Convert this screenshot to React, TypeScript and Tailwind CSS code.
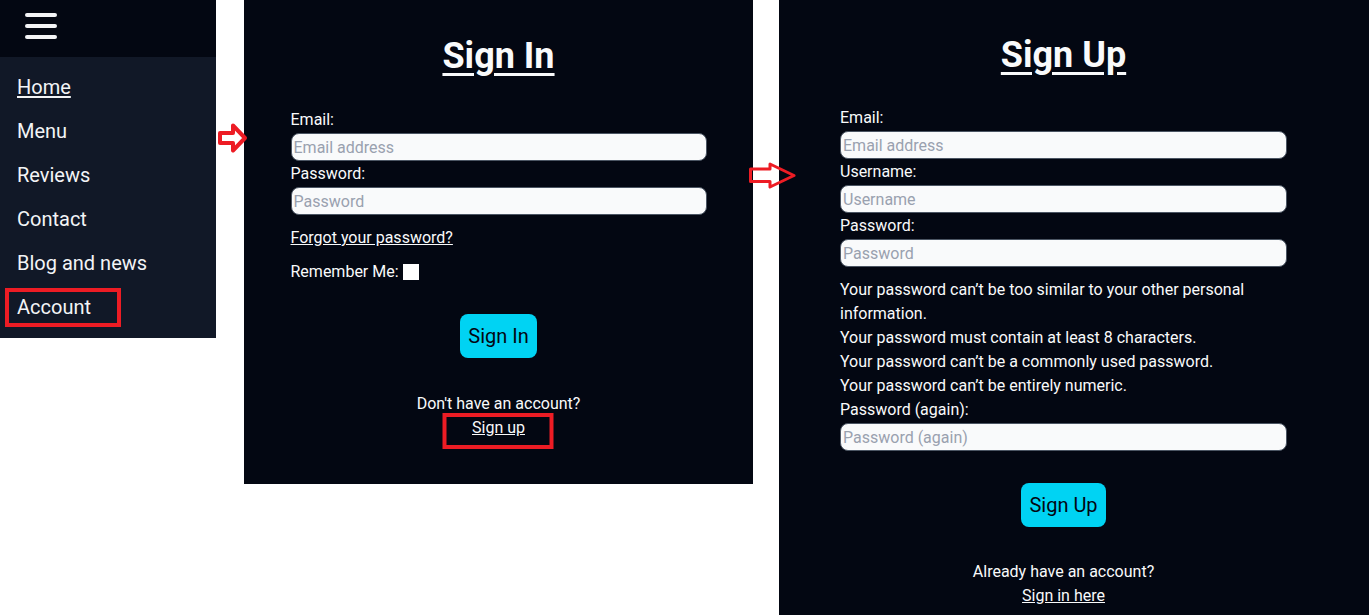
import React from "react"

const RED = "#ed1c24"

function Field({ label, placeholder, type = "text" }: { label: string; placeholder: string; type?: string }) {
  return (
    <div>
      <label className="block h-6 leading-6">{label}</label>
      <input
        type={type}
        placeholder={placeholder}
        className="mt-px mb-px block h-7 w-full rounded-lg border border-[#4b5563] bg-gray-50 px-0.5 text-base text-gray-900 placeholder:text-gray-400 outline-none"
      />
    </div>
  )
}

function SideMenu() {
  const items = ["Home", "Menu", "Reviews", "Contact", "Blog and news", "Account"]
  return (
    <div className="w-[216px] shrink-0">
      {/* top bar with hamburger */}
      <div className="h-[57px] bg-[#030712] pl-[25px] pt-[13px]">
        <div className="flex w-8 flex-col gap-[7px]">
          <span className="h-1 w-8 rounded-full bg-gray-100" />
          <span className="h-1 w-8 rounded-full bg-gray-100" />
          <span className="h-1 w-8 rounded-full bg-gray-100" />
        </div>
      </div>
      <nav className="bg-[#111827] pb-[9px] pt-2">
        {items.map((item, i) => (
          <div key={item} className="relative py-2 pl-[17px] text-xl leading-7 text-gray-100">
            <a href="#" className={i === 0 ? "underline underline-offset-2" : ""}>
              {item}
            </a>
            {item === "Account" && (
              <span className="pointer-events-none absolute left-[5px] top-[3px] h-[39px] w-[116px] border-4 border-[#ed1c24]" />
            )}
          </div>
        ))}
      </nav>
    </div>
  )
}

function SignIn() {
  return (
    <div className="w-[509px] shrink-0 bg-[#030712] pb-[44px] pt-[36px] text-gray-50">
      <h1 className="text-center text-4xl font-bold leading-10 underline underline-offset-[5px]">Sign In</h1>
      <form className="mx-auto mt-[32px] w-[416px]">
        <Field label="Email:" placeholder="Email address" />
        <Field label="Password:" placeholder="Password" type="password" />
        <a href="#" className="mt-[11px] block h-6 w-fit leading-6 underline">
          Forgot your password?
        </a>
        <div className="mt-[10px] flex h-6 items-center">
          <span>Remember Me:</span>
          <span className="ml-1 h-4 w-4 bg-white" />
        </div>
        <div className="mt-[30px] flex justify-center">
          <button type="button" className="h-11 rounded-lg bg-cyan-400 px-2 text-xl text-gray-950">
            Sign In
          </button>
        </div>
      </form>
      <p className="mt-[34px] text-center leading-6">Don't have an account?</p>
      <div className="text-center leading-6">
        <span className="relative inline-block">
          <a href="#" className="underline">
            Sign up
          </a>
          <span className="pointer-events-none absolute left-1/2 top-[-3px] h-9 w-[111px] -translate-x-1/2 border-4 border-[#ed1c24]" />
        </span>
      </div>
    </div>
  )
}

function SignUp() {
  const help = [
    "Your password can’t be too similar to your other personal information.",
    "Your password must contain at least 8 characters.",
    "Your password can’t be a commonly used password.",
    "Your password can’t be entirely numeric.",
  ]
  return (
    <div className="h-full w-[590px] shrink-0 bg-[#030712] pl-[61px] pt-[35px] text-gray-50">
      <div className="w-[447px]">
        <h1 className="text-center text-4xl font-bold leading-10 underline underline-offset-[5px]">Sign Up</h1>
        <form className="mt-[31px]">
          <Field label="Email:" placeholder="Email address" />
          <Field label="Username:" placeholder="Username" />
          <Field label="Password:" placeholder="Password" type="password" />
          <ul className="mt-[11px] leading-6">
            {help.map((h) => (
              <li key={h}>{h}</li>
            ))}
          </ul>
          <Field label="Password (again):" placeholder="Password (again)" type="password" />
          <div className="mt-8 flex justify-center">
            <button type="button" className="h-11 rounded-lg bg-cyan-400 px-2 text-xl text-gray-950">
              Sign Up
            </button>
          </div>
        </form>
        <p className="mt-[33px] text-center leading-6">Already have an account?</p>
        <div className="text-center leading-6">
          <a href="#" className="underline">
            Sign in here
          </a>
        </div>
      </div>
    </div>
  )
}

export default function App() {
  return (
    <div
      className="relative flex h-[615px] items-start overflow-hidden bg-white text-base"
      style={{ fontFamily: "Roboto, 'Noto Sans', sans-serif" }}
    >
      <SideMenu />
      <div className="ml-[28px]">
        <SignIn />
      </div>
      <div className="ml-[26px] h-full">
        <SignUp />
      </div>

      {/* annotation arrows */}
      <svg className="pointer-events-none absolute left-[216px] top-[122px]" width="32" height="32" viewBox="0 0 32 32">
        <polygon
          points="4,11 17,11 17,3.5 29,16 17,28.5 17,21 4,21"
          fill="white"
          stroke={RED}
          strokeWidth="4"
          strokeLinejoin="round"
        />
      </svg>
      <svg className="pointer-events-none absolute left-[747px] top-[161px]" width="50" height="30" viewBox="0 0 50 30">
        <polygon
          points="3.5,8 23,8 23,3 47,14.5 23,26 23,20.5 3.5,20.5"
          fill="white"
          fillOpacity="0"
          stroke={RED}
          strokeWidth="3"
          strokeLinejoin="round"
        />
      </svg>
    </div>
  )
}
